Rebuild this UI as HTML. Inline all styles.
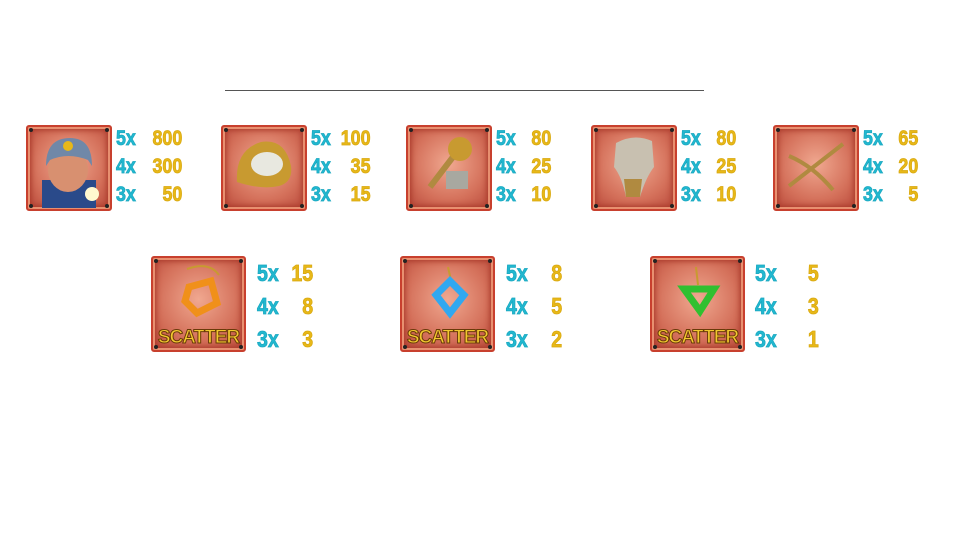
<!DOCTYPE html><html><head><style>
body{margin:0;width:960px;height:540px;background:#fff;position:relative;overflow:hidden;font-family:"Liberation Sans",sans-serif}
.ln{position:absolute;left:225px;top:90px;width:479px;height:1px;background:#555}
.t{position:absolute;box-sizing:border-box;border:2px solid #c8402e;border-radius:3px;background:radial-gradient(circle at 50% 45%,#f0a890,#d4705a 60%,#b8483a);box-shadow:inset 0 0 0 2px #e89070,inset 0 0 6px 3px #a83828}
.t i{position:absolute;width:4px;height:4px;border-radius:50%;background:#222}
.p{position:absolute;font-weight:bold;font-size:21px;line-height:28px;transform:scaleX(.85);transform-origin:left top}
.p div{display:flex}
.x{color:#22b8d0;width:34px;-webkit-text-stroke:.8px #1aa8c0}
.n{color:#e8b818;text-align:right;width:44px;-webkit-text-stroke:.8px #d8a810}
.p2 .n{width:32px}
.w35 .n{width:36px}
.w31 .n{width:31px}
.w40 .n{width:41px}
.sc{position:absolute;left:0;right:0;bottom:1px;text-align:center;font-weight:bold;font-size:19px;color:#f2c830;-webkit-text-stroke:1px #6a3a08;letter-spacing:-1px}
.ic{position:absolute;left:50%;top:45%;transform:translate(-50%,-50%)}
</style></head><body>
<div class="ln"></div>

<div class="t" style="left:26px;top:125px;width:86px;height:86px"><svg class="ic" width="70" height="76" viewBox="0 0 70 76" style="top:52%"><rect x="8" y="48" width="54" height="28" fill="#2a4a8a"/><ellipse cx="34" cy="38" rx="20" ry="22" fill="#d89070"/><path d="M12 34 Q12 6 36 6 Q58 6 58 34 L54 28 Q34 20 16 28Z" fill="#7088a8"/><circle cx="34" cy="14" r="5" fill="#e8b818"/><circle cx="58" cy="62" r="7" fill="#fff8d0"/></svg><i style="left:1px;top:1px"></i><i style="right:1px;top:1px"></i><i style="left:1px;bottom:1px"></i><i style="right:1px;bottom:1px"></i></div>
<div class="p" style="left:116px;top:125px"><div><span class="x">5x</span><span class="n">800</span></div><div><span class="x">4x</span><span class="n">300</span></div><div><span class="x">3x</span><span class="n">50</span></div></div>

<div class="t" style="left:221px;top:125px;width:86px;height:86px"><svg class="ic" width="66" height="56" viewBox="0 0 66 56"><path d="M6 46 Q4 14 30 6 Q54 2 60 30 Q62 46 48 50 Q30 54 6 46Z" fill="#c89a30"/><ellipse cx="36" cy="28" rx="16" ry="12" fill="#e8e8e0"/></svg><i style="left:1px;top:1px"></i><i style="right:1px;top:1px"></i><i style="left:1px;bottom:1px"></i><i style="right:1px;bottom:1px"></i></div>
<div class="p w35" style="left:311px;top:125px"><div><span class="x">5x</span><span class="n">100</span></div><div><span class="x">4x</span><span class="n">35</span></div><div><span class="x">3x</span><span class="n">15</span></div></div>

<div class="t" style="left:406px;top:125px;width:86px;height:86px"><svg class="ic" width="66" height="66" viewBox="0 0 66 66"><path d="M14 56 L40 22" stroke="#b08a40" stroke-width="6"/><circle cx="44" cy="18" r="12" fill="#c89a30"/><rect x="30" y="40" width="22" height="18" fill="#a8a8a0"/></svg><i style="left:1px;top:1px"></i><i style="right:1px;top:1px"></i><i style="left:1px;bottom:1px"></i><i style="right:1px;bottom:1px"></i></div>
<div class="p w31" style="left:496px;top:125px"><div><span class="x">5x</span><span class="n">80</span></div><div><span class="x">4x</span><span class="n">25</span></div><div><span class="x">3x</span><span class="n">10</span></div></div>

<div class="t" style="left:591px;top:125px;width:86px;height:86px"><svg class="ic" width="56" height="70" viewBox="0 0 56 70"><path d="M10 14 Q28 4 46 12 L48 38 Q40 48 34 68 L20 68 Q16 48 8 38Z" fill="#c8c0b0"/><path d="M20 68 L34 68 L36 50 L18 50Z" fill="#b08a40"/></svg><i style="left:1px;top:1px"></i><i style="right:1px;top:1px"></i><i style="left:1px;bottom:1px"></i><i style="right:1px;bottom:1px"></i></div>
<div class="p w31" style="left:681px;top:125px"><div><span class="x">5x</span><span class="n">80</span></div><div><span class="x">4x</span><span class="n">25</span></div><div><span class="x">3x</span><span class="n">10</span></div></div>

<div class="t" style="left:773px;top:125px;width:86px;height:86px"><svg class="ic" width="66" height="56" viewBox="0 0 66 56"><path d="M6 50 L60 8 M6 20 Q30 30 50 54" stroke="#b08a40" stroke-width="4" fill="none"/></svg><i style="left:1px;top:1px"></i><i style="right:1px;top:1px"></i><i style="left:1px;bottom:1px"></i><i style="right:1px;bottom:1px"></i></div>
<div class="p w31" style="left:863px;top:125px"><div><span class="x">5x</span><span class="n">65</span></div><div><span class="x">4x</span><span class="n">20</span></div><div><span class="x">3x</span><span class="n">5</span></div></div>

<div class="t" style="left:151px;top:256px;width:95px;height:96px"><svg class="ic" width="60" height="60" viewBox="0 0 60 60" style="top:40%"><path d="M18 4 Q40 -4 50 10" stroke="#c89a30" stroke-width="2" fill="none"/><path d="M20 22 L42 16 L48 38 L28 48 L16 36Z" fill="none" stroke="#f0901a" stroke-width="7"/></svg><div class="sc">SCATTER</div><i style="left:1px;top:1px"></i><i style="right:1px;top:1px"></i><i style="left:1px;bottom:1px"></i><i style="right:1px;bottom:1px"></i></div>
<div class="p p2" style="left:257px;top:257px;line-height:33px;font-size:23px"><div><span class="x">5x</span><span class="n">15</span></div><div><span class="x">4x</span><span class="n">8</span></div><div><span class="x">3x</span><span class="n">3</span></div></div>

<div class="t" style="left:400px;top:256px;width:95px;height:96px"><svg class="ic" width="60" height="60" viewBox="0 0 60 60" style="top:40%"><path d="M30 2 L34 20" stroke="#c89a30" stroke-width="2"/><path d="M18 30 L32 16 L46 30 L32 48Z" fill="none" stroke="#30a8f0" stroke-width="7"/></svg><div class="sc">SCATTER</div><i style="left:1px;top:1px"></i><i style="right:1px;top:1px"></i><i style="left:1px;bottom:1px"></i><i style="right:1px;bottom:1px"></i></div>
<div class="p p2" style="left:506px;top:257px;line-height:33px;font-size:23px"><div><span class="x">5x</span><span class="n">8</span></div><div><span class="x">4x</span><span class="n">5</span></div><div><span class="x">3x</span><span class="n">2</span></div></div>

<div class="t" style="left:650px;top:256px;width:95px;height:96px"><svg class="ic" width="60" height="60" viewBox="0 0 60 60" style="top:40%"><path d="M28 2 L30 20" stroke="#c89a30" stroke-width="2"/><path d="M16 24 L46 24 L32 46Z" fill="none" stroke="#30c030" stroke-width="7"/></svg><div class="sc">SCATTER</div><i style="left:1px;top:1px"></i><i style="right:1px;top:1px"></i><i style="left:1px;bottom:1px"></i><i style="right:1px;bottom:1px"></i></div>
<div class="p p2 w40" style="left:755px;top:257px;line-height:33px;font-size:23px"><div><span class="x">5x</span><span class="n">5</span></div><div><span class="x">4x</span><span class="n">3</span></div><div><span class="x">3x</span><span class="n">1</span></div></div>
</body></html>
